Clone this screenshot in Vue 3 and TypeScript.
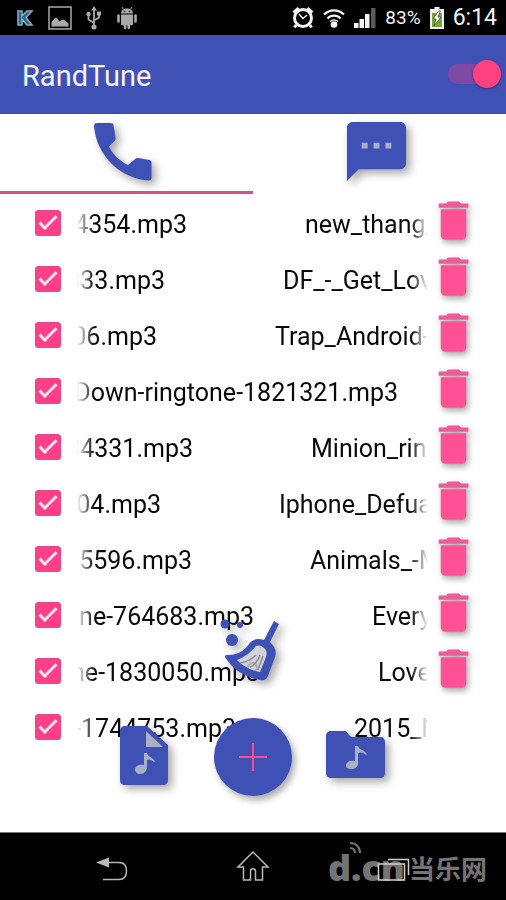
<script setup lang="ts">
import { ref } from 'vue'

interface Track {
  tail: string
  head: string
  // width in pixels still taken by the end of the scrolling name
  scroll: number
  checked: boolean
  removable: boolean
}

const enabled = ref(true)

const tracks = ref<Track[]>([
  { tail: '4354.mp3', head: 'new_thang_', scroll: 110, checked: true, removable: true },
  { tail: '833.mp3', head: 'DF_-_Get_Lov', scroll: 88, checked: true, removable: true },
  { tail: '06.mp3', head: 'Trap_Android-', scroll: 80, checked: true, removable: true },
  { tail: 'Down-ringtone-1821321.mp3', head: '', scroll: 321, checked: true, removable: true },
  { tail: '34331.mp3', head: 'Minion_rin', scroll: 116, checked: true, removable: true },
  { tail: '04.mp3', head: 'Iphone_Defua', scroll: 84, checked: true, removable: true },
  { tail: '5596.mp3', head: 'Animals_-M', scroll: 115, checked: true, removable: true },
  { tail: 'ne-764683.mp3', head: 'Every', scroll: 177, checked: true, removable: true },
  { tail: 'ne-1830050.mp3', head: 'Love', scroll: 183, checked: true, removable: true },
  { tail: '-1744753.mp3', head: '2015_N', scroll: 159, checked: true, removable: false },
])

function removeTrack(index: number): void {
  tracks.value.splice(index, 1)
}
</script>

<template>
  <div class="screen">
    <div class="status">
      <div class="status-group left">
        <svg class="k-icon" width="18" height="18" viewBox="0 0 18 18" aria-hidden="true">
          <path d="M2 2h4v5l5-5h5l-6 6.500 6 7.500h-5l-5-6v6H2z" fill="#1c6c98" stroke="#9aa7b0" stroke-width="1.500" />
        </svg>
        <svg width="24" height="24" viewBox="0 0 24 24" aria-hidden="true">
          <rect x="1" y="1" width="22" height="22" fill="none" stroke="#a9a9a9" stroke-width="1.500" />
          <path d="M3.500 20.500v-4.500l3-3.500 2-1 3 4 3-2 2 .5 4 3.500v3z" fill="#a9a9a9" />
        </svg>
        <svg width="16" height="24" viewBox="0 0 16 24" aria-hidden="true">
          <path d="M8 3v17M8 17l-5.500-3.500V8.500M8 14.500l5-3V8" fill="none" stroke="#a9a9a9" stroke-width="1.800" />
          <path d="M8 0l3 4.500H5zM11 5.500h4v4h-4z" fill="#a9a9a9" />
          <circle cx="2.500" cy="8" r="2.200" fill="#a9a9a9" />
          <circle cx="8" cy="21" r="2.600" fill="#a9a9a9" />
        </svg>
        <svg width="22" height="24" viewBox="0 0 22 24" aria-hidden="true">
          <path d="M5 7.500C5 4.500 7.500 2.500 11 2.500s6 2 6 5zM5 8.500h12V18c0 .8-.6 1.300-1.400 1.300H14V22a1.300 1.300 0 0 1-2.600 0v-2.700h-1V22a1.300 1.300 0 0 1-2.600 0v-2.700H6.400c-.8 0-1.400-.5-1.400-1.300z" fill="#a9a9a9" />
          <path d="M2.500 9.500v6M19.500 9.500v6" stroke="#a9a9a9" stroke-width="2.600" stroke-linecap="round" />
          <path d="M7.500 3.500L6 1M14.500 3.500L16 1" stroke="#a9a9a9" stroke-width="1" />
          <circle cx="8.500" cy="5.500" r=".8" /><circle cx="13.500" cy="5.500" r=".8" />
        </svg>
      </div>
      <div class="status-group right">
        <svg width="22" height="24" viewBox="0 0 22 24" aria-hidden="true">
          <circle cx="11" cy="12" r="8.500" fill="none" stroke="#f4f4f4" stroke-width="3" />
          <path d="M7 8l4 4.500 4-3.500" fill="none" stroke="#f4f4f4" stroke-width="1.500" />
          <path d="M1.500 6.500l5-4.500M20.500 6.500l-5-4.500M4 19l-1.500 2.500M18 19l1.500 2.500" stroke="#f4f4f4" stroke-width="3" />
        </svg>
        <svg width="22" height="22" viewBox="0 0 22 22" aria-hidden="true">
          <path d="M1 7.500a14 14 0 0 1 20 0M4.500 11.500a9 9 0 0 1 13 0" fill="none" stroke="#f4f4f4" stroke-width="2.200" />
          <path d="M7 14.500a6 6 0 0 1 8 0" fill="none" stroke="#f4f4f4" stroke-width="1.500" />
          <circle cx="11" cy="17.500" r="3.300" fill="#f4f4f4" />
        </svg>
        <svg width="22" height="20" viewBox="0 0 22 20" aria-hidden="true">
          <path d="M0 15h4.500v5H0zM5.500 11h4.500v9H5.500zM11 6h4.500v14H11z" fill="#f4f4f4" />
          <path d="M17 0h4.500v20H17z" fill="#5b5b5b" />
        </svg>
        <span class="percent">83%</span>
        <svg width="14" height="22" viewBox="0 0 14 22" aria-hidden="true">
          <path d="M4.500 0h5v2H14v20H0V2h4.500z" fill="#f1f1f1" />
          <path d="M2 6h10v14H2z" fill="#7da43c" />
          <path d="M8.500 4L3 12h3l-2 7 7-9H8l2.500-6z" fill="#fff" stroke="#38521c" stroke-width=".8" />
        </svg>
        <span class="clock">6:14</span>
      </div>
    </div>

    <header class="appbar">
      <h1>RandTune</h1>
      <input v-model="enabled" class="switch" type="checkbox" role="switch" aria-label="RandTune" />
    </header>

    <nav class="tabs" aria-label="Sounds">
      <button class="tab active" type="button" aria-label="Calls">
        <svg class="shadow" width="58" height="58" viewBox="0 0 58 58" aria-hidden="true">
          <path d="M3 0h14c1.500 0 2.200.8 2.500 2l2 13c.2 1.200 0 2-.8 2.800L15 23.500c4 8 10.500 14.500 19 18.500l7.500-6.200c.8-.7 1.600-.9 2.800-.7l11 1.900c1.500.3 2.200 1.200 2.200 2.600V55c0 1.700-1 2.500-2.700 2.500C27 56 2.500 33 0 3 0 1 1 0 3 0z" />
        </svg>
      </button>
      <button class="tab" type="button" aria-label="Messages">
        <svg class="shadow" width="71" height="71" viewBox="0 0 24 24" aria-hidden="true">
          <path d="M20 2H4c-1.100 0-2 .9-2 2v18l4-4h14c1.100 0 2-.9 2-2V4c0-1.100-.9-2-2-2z" />
          <path class="cut" d="M7 9h2v2H7zM11 9h2v2h-2zM15 9h2v2h-2z" />
        </svg>
      </button>
    </nav>

    <main class="content">
      <ul class="list">
        <li v-for="(track, i) in tracks" :key="track.tail" class="row">
          <input :id="'track-' + i" v-model="track.checked" class="check" type="checkbox" />
          <label :for="'track-' + i" class="name">
            <span class="tail" :style="{ width: track.scroll + 'px' }">{{ track.tail }}</span>
            <span class="head">{{ track.head }}</span>
          </label>
          <button v-if="track.removable" class="delete" type="button" aria-label="Delete" @click="removeTrack(i)">
            <svg width="51" height="51" viewBox="0 0 24 24" aria-hidden="true">
              <path fill="#ff5193" d="M6 19c0 1.100.9 2 2 2h8c1.100 0 2-.9 2-2V6.700H6z" />
              <path fill="#ea5d97" d="M19 4h-3.500l-1-1h-5l-1 1H5v2h14z" />
            </svg>
          </button>
        </li>
      </ul>

      <div class="actions">
        <button class="broom" type="button" aria-label="Clear list">
          <svg class="shadow" width="56" height="62" viewBox="0 0 56 62" aria-hidden="true">
            <path d="M4 37c10 0 17-5 23-13 4-3 8-3 13 0 5 6 6 9 4 14l-5 18c-13 1-27-5-35-19z" fill="#d9dade" fill-opacity=".8" />
            <path fill-rule="evenodd" d="M49 1l5 3-9 18c5 5 7 9 5 15l-7 19c-2 4-4 5-8 4C20 57 8 50 0 37c0-2 1-2 3-2 10 0 16-4 21-11 4-5 9-6 15-4zM31 26c-5 6-11 11-19 14 6 6 13 10 23 12l6-15c1-4 1-6-2-9s-5-3-8-2z" />
            <path d="M31 35c-4 4-9 7-16 8M35 35c-2 6-5 10-10 12M38 36l-5 14" fill="none" stroke="#8c8f9c" stroke-width="1.500" />
            <circle cx="7" cy="20" r="6" />
            <circle cx="0" cy="4" r="4.500" /><circle cx="15" cy="5" r="3" />
          </svg>
        </button>
        <div class="action-row">
          <button class="pick file" type="button" aria-label="Add file">
            <svg class="shadow" width="48" height="59" viewBox="0 0 48 59" aria-hidden="true">
              <path d="M5 0h22l21 19v35c0 3-2 5-5 5H5c-3 0-5-2-5-5V5c0-3 2-5 5-5z" />
              <path class="cut" d="M26 5v16h17zM24 27h3c1 4 4 3 8 8l-1 1c-3-3-5-3-7-2v7c0 4-3 7-7 7-3 0-5-2-5-4 0-4 4-6 9-5z" />
            </svg>
          </button>
          <button class="fab" type="button" aria-label="Add">
            <svg width="28" height="28" viewBox="0 0 28 28" aria-hidden="true">
              <path d="M14 0v28M0 14h28" stroke="#ff4a90" stroke-width="2" />
            </svg>
          </button>
          <button class="pick" type="button" aria-label="Add folder">
            <svg class="shadow" width="60" height="48" viewBox="0 0 60 48" aria-hidden="true">
              <path d="M5 0h14c3 0 3 6 8 6h27c3 0 5 2 5 5v31c0 3-2 5-5 5H5c-3 0-5-2-5-5V5c0-3 2-5 5-5z" />
              <path class="cut" d="M29 15h3c1 4 5 3 9 8l-1 1c-3-3-6-3-8-2v10c0 4-3 6-7 6-3 0-5-1-5-3 0-4 4-6 9-5z" />
            </svg>
          </button>
        </div>
      </div>
    </main>

    <footer class="navbar">
      <button type="button" aria-label="Back">
        <svg width="34" height="34" viewBox="0 0 34 34" aria-hidden="true">
          <path d="M1 12.500l13-5v10z" fill="#b9b9b9" />
          <path d="M13 12.500h11c5 0 7.500 3 7.500 8.500s-2.500 8.500-7.500 8.500H8" fill="none" stroke="#b9b9b9" stroke-width="1.500" />
        </svg>
      </button>
      <button type="button" aria-label="Home">
        <svg width="34" height="34" viewBox="0 0 34 34" aria-hidden="true">
          <path d="M17 2L2 17h5.500v13H14.500V21c0-3 5-3 5 0v9h7V17H32z" fill="none" stroke="#b9b9b9" stroke-width="1.500" />
        </svg>
      </button>
      <button type="button" aria-label="Recent apps">
        <svg width="34" height="34" viewBox="0 0 34 34" aria-hidden="true">
          <path d="M1.500 14h26v16h-26zM11 9.500h20.500V25" fill="none" stroke="#d0d0d0" stroke-width="1.500" />
        </svg>
      </button>
      <div class="mark">
        <span class="mark-latin">d.cn</span>
        <span class="mark-cjk">当乐网</span>
        <svg class="waves" width="14" height="14" viewBox="0 0 14 14" aria-hidden="true">
          <path d="M2 1c6 0 10 4 10 10M2 6c3 0 5 2 5 5" fill="none" stroke="#747474" stroke-width="2" />
        </svg>
      </div>
    </footer>
  </div>
</template>

<style>
body {
  background: #fff;
}
</style>

<style scoped>
.screen {
  display: flex;
  flex-direction: column;
  min-height: 100vh;
  font-family: Roboto, "Noto Sans", sans-serif;
  color: #0a0a0a;
  background: #fff;
  overflow: hidden;
}

button {
  display: flex;
  align-items: center;
  justify-content: center;
  padding: 0;
  border: 0;
  background: none;
  cursor: pointer;
}

svg {
  display: block;
  flex: none;
  overflow: visible;
}

.status {
  display: flex;
  justify-content: space-between;
  height: 35px;
  padding: 0 9px 0 16px;
  background: #000;
  color: #f4f4f4;
}

.status-group {
  display: flex;
  align-items: center;
}

.left {
  gap: 14px;
}

.right {
  gap: 9px;
}

.percent {
  font-size: 19px;
}

.clock {
  font-size: 23px;
}

.appbar {
  display: flex;
  align-items: center;
  justify-content: space-between;
  height: 79px;
  padding: 0 5px 0 22px;
  background: #3f51b5;
  box-sizing: border-box;
  border-bottom: 1px solid #3a4a9c;
}

h1 {
  margin: 0;
  padding-top: 4px;
  font-size: 29px;
  font-weight: 400;
  color: #f3f5ff;
}

.switch {
  appearance: none;
  display: flex;
  align-items: center;
  justify-content: flex-end;
  width: 53px;
  height: 20px;
  margin: 0;
  border-radius: 10px;
  background: #7f4aa5;
}

.switch::before {
  content: "";
  flex: none;
  width: 28px;
  height: 28px;
  border-radius: 50%;
  background: #ff4081;
  box-shadow: 0 1px 3px rgba(20, 20, 60, 0.5);
}

.switch:not(:checked) {
  justify-content: flex-start;
}

.shadow {
  fill: #3f51b5;
  filter: drop-shadow(4px 4px 4px rgba(0, 0, 0, 0.35));
}

.cut {
  fill: #aab0c4;
}

.tabs {
  display: flex;
  height: 80px;
}

.tab {
  flex: 1;
  padding: 0 7px 2px 0;
  border-bottom: 3px solid transparent;
}

.tab.active {
  border-bottom-color: #d94f86;
}

.content {
  position: relative;
  flex: 1;
}

.list {
  margin: 0;
  padding: 1px 0 0;
  list-style: none;
}

.row {
  display: flex;
  align-items: center;
  height: 56px;
  padding: 0 27px 0 35px;
}

.check {
  appearance: none;
  display: flex;
  justify-content: center;
  flex: none;
  width: 26px;
  height: 26px;
  margin: 0 16px 0 0;
  border: 1px solid #e04a86;
  border-radius: 3px;
  background: #ff4088;
}

.check:checked::before {
  content: "";
  width: 15px;
  height: 6px;
  margin-top: 5px;
  border: solid #ffe3f2;
  border-width: 0 0 3px 3px;
  transform: rotate(-45deg);
}

.name {
  display: flex;
  flex: 1;
  gap: 118px;
  min-width: 0;
  margin-right: 51px;
  padding-top: 3px;
  overflow: hidden;
  font-size: 25px;
  line-height: 36px;
  white-space: nowrap;
  mask-image: linear-gradient(to right, transparent, #000 17px, #000 calc(100% - 17px), transparent);
}

.name:has(+ .delete) {
  margin-right: 0;
}

.tail {
  display: flex;
  flex: none;
  justify-content: flex-end;
}

.head {
  flex: none;
}

.delete {
  flex: none;
  width: 51px;
  height: 56px;
  padding-bottom: 6px;
}

.delete svg {
  filter: drop-shadow(2px 3px 3px rgba(0, 0, 0, 0.35));
}

.actions {
  position: absolute;
  right: 0;
  bottom: 36px;
  left: 0;
  display: flex;
  flex-direction: column;
  align-items: center;
  gap: 36px;
}

.action-row {
  display: flex;
  align-items: center;
  justify-content: center;
  gap: 34px;
}

.pick {
  width: 60px;
  height: 60px;
  padding-bottom: 4px;
}

.pick.file {
  justify-content: flex-start;
}

.fab {
  width: 78px;
  height: 78px;
  border-radius: 50%;
  background: #3f51b5;
  box-shadow: 3px 4px 7px rgba(0, 0, 0, 0.35);
}

.navbar {
  position: relative;
  display: grid;
  grid-template-columns: repeat(3, 141px);
  align-items: center;
  justify-content: center;
  height: 68px;
  box-sizing: border-box;
  border-top: 1px solid #777;
  background: #000;
}

.navbar button {
  z-index: 1;
}

.mark {
  position: absolute;
  right: 19px;
  bottom: 12px;
  display: flex;
  align-items: center;
  gap: 4px;
  color: #747474;
  font-weight: 700;
  line-height: 40px;
}

.mark-latin {
  font-family: "Open Sans", sans-serif;
  font-size: 36px;
  font-weight: 800;
}

.mark-cjk {
  font-family: "Noto Sans CJK SC", sans-serif;
  font-size: 26px;
}

.waves {
  position: absolute;
  top: -6px;
  left: 20px;
}
</style>
